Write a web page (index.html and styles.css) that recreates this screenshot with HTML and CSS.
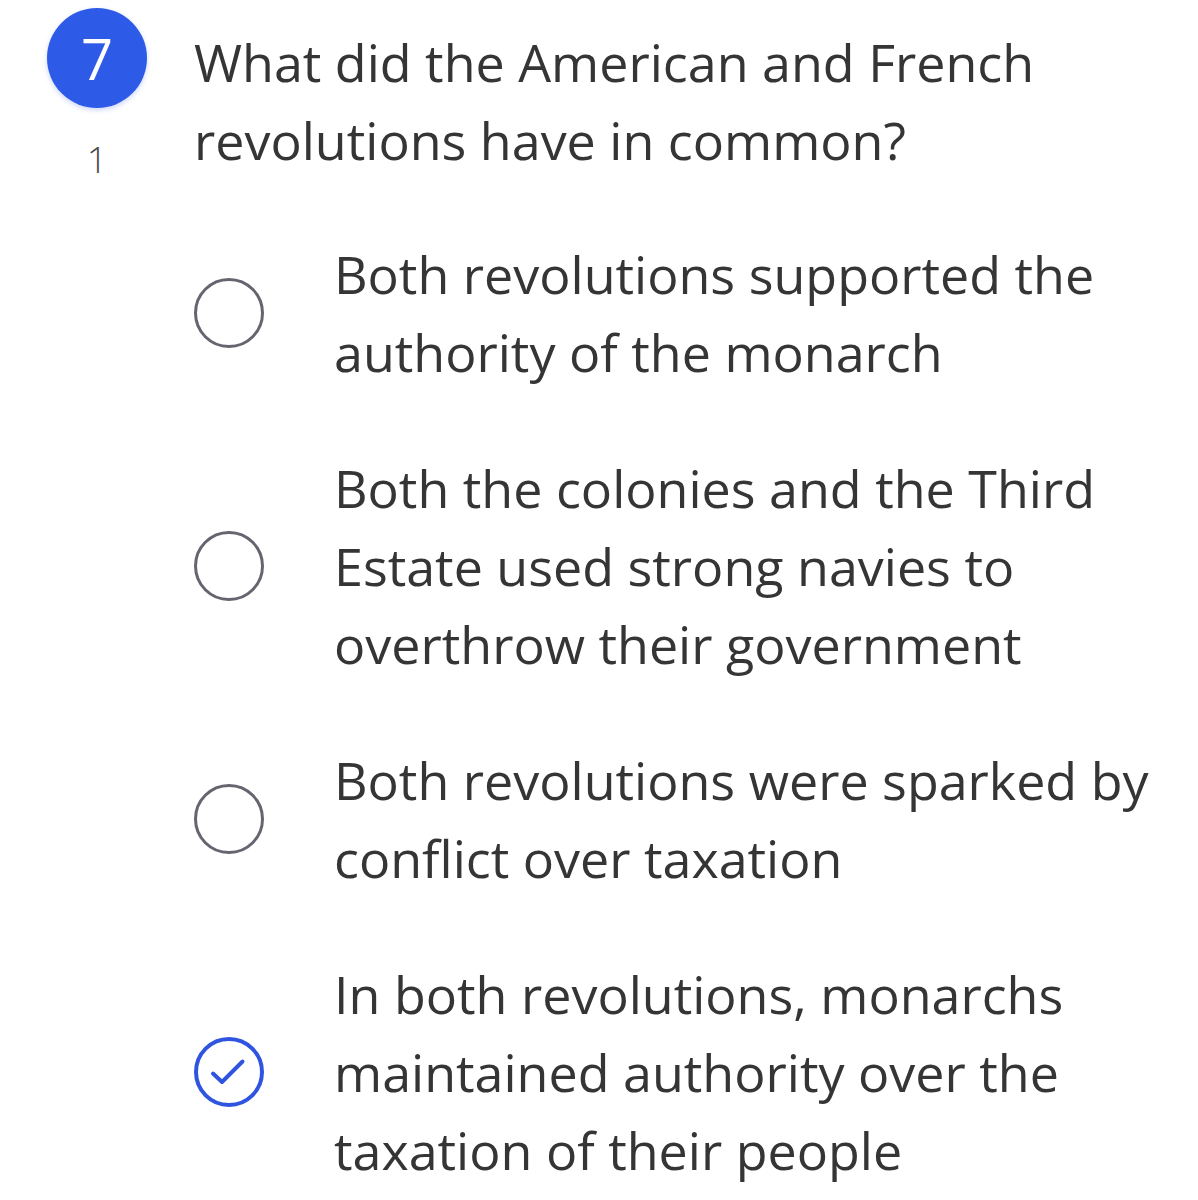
FILE: index.html
```html
<!DOCTYPE html>
<html>
<head>
<meta charset="utf-8">
<link rel="stylesheet" href="styles.css">
</head>
<body>
<div class="page">
  <div class="question">
    <div class="qside">
      <div class="badge">7</div>
      <div class="points">1</div>
    </div>
    <div class="qtext">What did the American and French revolutions have in common?</div>
  </div>
  <div class="options">
    <div class="option">
      <span class="radio"></span>
      <div class="otext">Both revolutions supported the authority of the monarch</div>
    </div>
    <div class="option">
      <span class="radio"></span>
      <div class="otext">Both the colonies and the Third Estate used strong navies to overthrow their government</div>
    </div>
    <div class="option">
      <span class="radio"></span>
      <div class="otext">Both revolutions were sparked by conflict over taxation</div>
    </div>
    <div class="option">
      <span class="radio checked">
        <svg viewBox="0 0 70 70" width="70" height="70"><path d="M19 36.5 L28 45 L48.5 24.5" fill="none" stroke="#2f55e0" stroke-width="4" stroke-linecap="round" stroke-linejoin="round"/></svg>
      </span>
      <div class="otext">In both revolutions, monarchs maintained authority over the taxation of their people</div>
    </div>
  </div>
</div>
</body>
</html>
```
FILE: styles.css
```css
html, body {
  margin: 0;
  padding: 0;
  background: #ffffff;
}
body {
  font-family: "Open Sans", "Noto Sans", sans-serif;
  color: #353535;
}
.page {
  padding-top: 8px;
}
.question {
  display: flex;
  align-items: flex-start;
}
.qside {
  width: 194px;
  flex: none;
  display: flex;
  flex-direction: column;
  align-items: center;
  box-sizing: border-box;
  padding-left: 47px;
  padding-right: 47px;
}
.badge {
  width: 100px;
  height: 100px;
  border-radius: 50%;
  background: #2e5ae8;
  color: #ffffff;
  font-size: 56px;
  line-height: 100px;
  text-align: center;
  box-shadow: 0 2px 5px rgba(46, 90, 232, 0.25);
}
.points {
  margin-top: 25px;
  font-size: 36px;
  line-height: 54px;
  font-weight: 300;
  color: #4a4a4a;
}
.qtext {
  margin-top: 15px;
  font-size: 52px;
  line-height: 78px;
  padding-right: 40px;
}
.options {
  margin-top: 48px;
  padding-left: 194px;
  display: flex;
  flex-direction: column;
  gap: 58px;
}
.option {
  display: flex;
  align-items: center;
}
.radio {
  flex: none;
  width: 70px;
  height: 70px;
  box-sizing: border-box;
  border: 3px solid #66646f;
  border-radius: 50%;
  position: relative;
}
.radio.checked {
  border: 4.5px solid #2f55e0;
}
.radio svg {
  position: absolute;
  left: -4.5px;
  top: -4.5px;
}
.otext {
  margin-left: 70px;
  font-size: 52px;
  line-height: 78px;
}
```
